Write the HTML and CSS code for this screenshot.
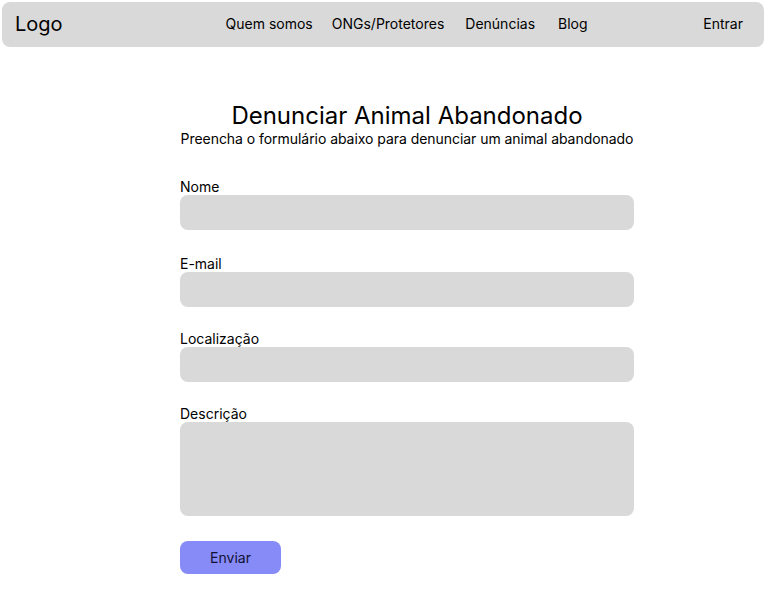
FILE: index.html
```html
<!DOCTYPE html>
<html lang="pt-BR">
<head>
<meta charset="utf-8">
<title>Denunciar Animal Abandonado</title>
<link rel="stylesheet" href="styles.css">
</head>
<body>
<header class="navbar">
  <div class="logo">Logo</div>
  <nav class="links">
    <a href="#">Quem somos</a>
    <a href="#">ONGs/Protetores</a>
    <a href="#" class="complaints">Denúncias</a>
    <a href="#" class="blog">Blog</a>
  </nav>
  <a href="#" class="login">Entrar</a>
</header>
<main class="page">
  <h1 class="title">Denunciar Animal Abandonado</h1>
  <p class="subtitle">Preencha o formulário abaixo para denunciar um animal abandonado</p>
  <form class="form">
    <label class="field field-first">
      <span class="label">Nome</span>
      <input class="input" type="text">
    </label>
    <label class="field">
      <span class="label">E-mail</span>
      <input class="input" type="email">
    </label>
    <label class="field">
      <span class="label">Localização</span>
      <input class="input" type="text">
    </label>
    <label class="field">
      <span class="label">Descrição</span>
      <textarea class="input textarea"></textarea>
    </label>
    <button type="button" class="submit">Enviar</button>
  </form>
</main>
</body>
</html>
```
FILE: styles.css
```css
* { box-sizing: border-box; }
body {
  margin: 0;
  font-family: Inter, "Noto Sans", sans-serif;
  color: #000;
  background: #fff;
}
.navbar {
  margin: 2px;
  height: 45px;
  background: #d9d9d9;
  border-radius: 8px;
  display: flex;
  align-items: center;
  padding: 0 21px 2px 13px;
}
.logo {
  font-size: 20px;
}
.links {
  display: flex;
  gap: 19px;
  margin-left: 163px;
}
.links a, .login {
  color: #000;
  text-decoration: none;
  font-size: 14px;
}
.links .complaints { margin-left: 2px; }
.links .blog { margin-left: 4px; }
.login { margin-left: auto; }
.page {
  width: 454px;
  margin-left: 180px;
  padding-top: 52px;
}
.title {
  margin: 0;
  font-size: 24px;
  font-weight: 400;
  text-align: center;
  line-height: 29px;
}
.subtitle {
  margin: 0 -10px;
  font-size: 14px;
  line-height: 17px;
  text-align: center;
  white-space: nowrap;
  letter-spacing: -0.05px;
}
.form {
  margin-top: 31px;
  display: flex;
  flex-direction: column;
  gap: 23px;
}
.field {
  display: flex;
  flex-direction: column;
}
.field-first {
  margin-bottom: 2px;
}
.label {
  font-size: 14px;
  line-height: 17px;
}
.input {
  display: block;
  width: 100%;
  height: 35px;
  border: none;
  border-radius: 8px;
  background: #d9d9d9;
  font: inherit;
}
.textarea {
  height: 94px;
  resize: none;
}
.submit {
  margin-top: 2px;
  width: 101px;
  height: 33px;
  border: none;
  border-radius: 8px;
  background: #878bf8;
  color: #111133;
  font-family: inherit;
  font-size: 14px;
}
```
